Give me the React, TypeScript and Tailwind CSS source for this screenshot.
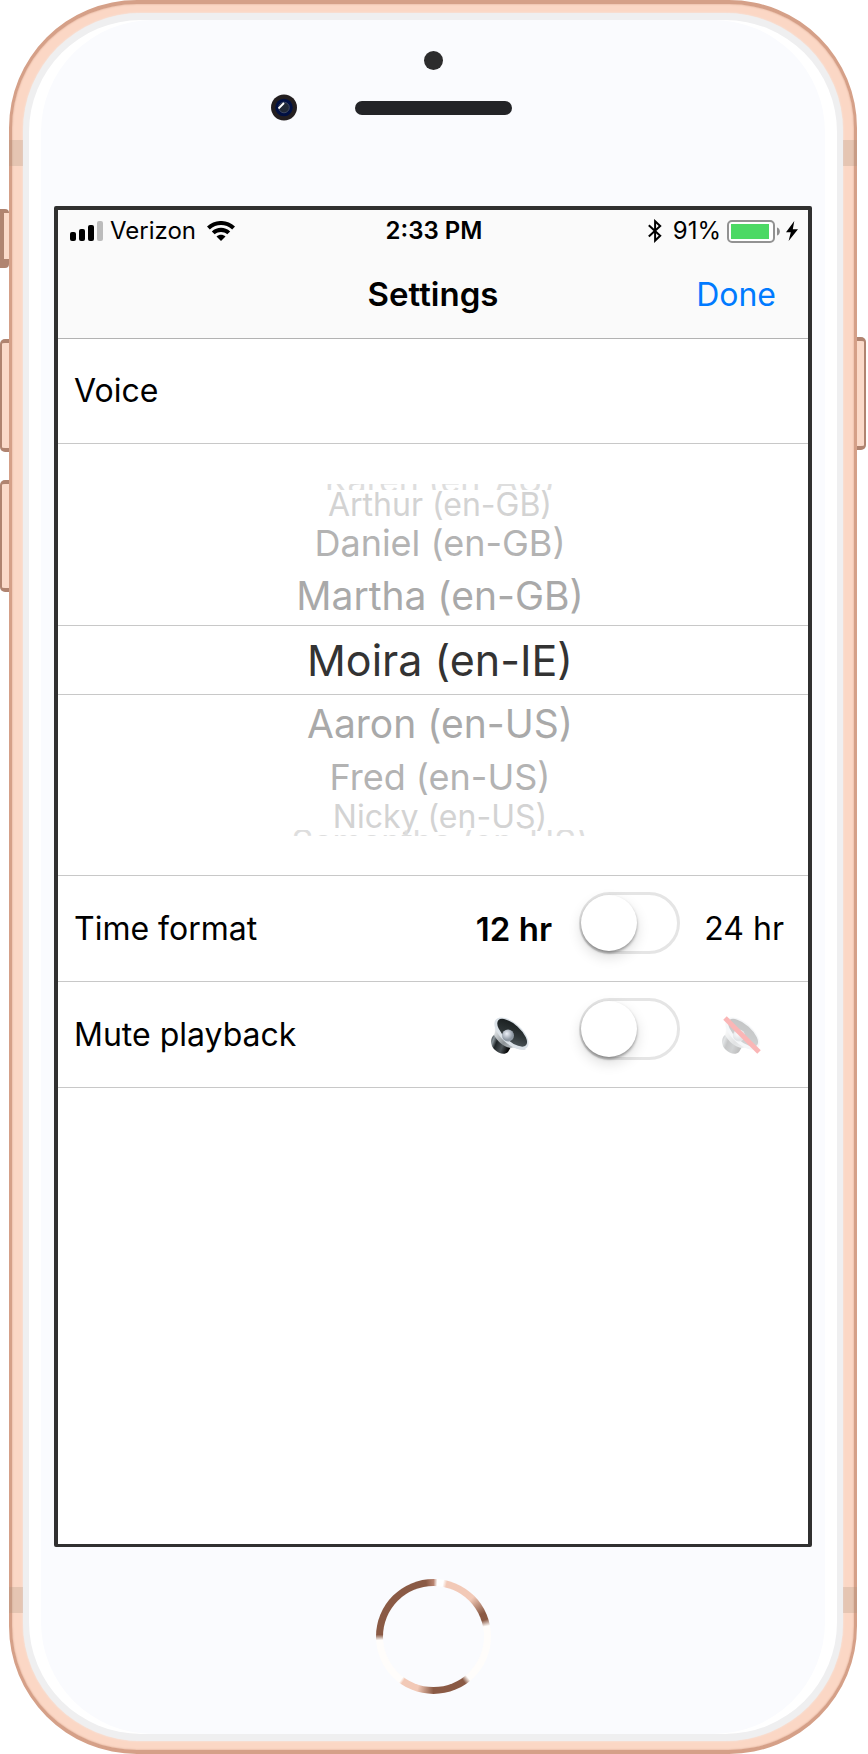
import React, { useState } from "react";

const edgeButton = "absolute border-[#b08470] bg-[#fbdac9]";

const antennaBands = [
  "left-0 top-[140px]",
  "right-0 top-[140px]",
  "left-0 bottom-[141px]",
  "right-0 bottom-[141px]",
];

const voices = [
  { name: "Karen (en-AU)", row: "h-[6px] items-end overflow-hidden text-[34px] text-[#dedede]", text: "-mb-[8px]" },
  { name: "Arthur (en-GB)", row: "h-[30px] items-center text-[32px] text-[#d3d3d3]", text: "" },
  { name: "Daniel (en-GB)", row: "h-[46px] items-center text-[36px] text-[#b3b3b3]", text: "" },
  { name: "Martha (en-GB)", row: "h-[59px] items-center text-[39px] text-[#a9a9a9]", text: "" },
  { name: "Moira (en-IE)", row: "h-[70px] items-center text-[43px] text-[#333333]", text: "" },
  { name: "Aaron (en-US)", row: "h-[56px] items-center text-[39px] text-[#a9a9a9]", text: "" },
  { name: "Fred (en-US)", row: "h-[52px] items-center text-[36px] text-[#b3b3b3]", text: "" },
  { name: "Nicky (en-US)", row: "h-[27px] items-center text-[32px] text-[#d3d3d3]", text: "" },
  { name: "Samantha (en-US)", row: "h-[6px] items-start overflow-hidden text-[34px] text-[#dedede]", text: "-mt-[5px]" },
];

function SignalBars() {
  return (
    <svg width="33" height="20" viewBox="0 0 33 20" aria-hidden="true">
      <rect x="0" y="11" width="6" height="9" rx="2" />
      <rect x="9" y="8" width="6" height="12" rx="2" />
      <rect x="18" y="4" width="6" height="16" rx="2" />
      <rect x="27" y="0" width="6" height="20" rx="2" fill="#bcbcbc" />
    </svg>
  );
}

function Wifi() {
  return (
    <svg width="28" height="20" viewBox="0 0 28 20" aria-hidden="true">
      <path d="M0 5.6C8 -1.9 20 -1.9 28 5.6L25.2 8.4C18.8 2.6 9.2 2.6 2.8 8.4Z" />
      <path d="M4.8 10.5C10 5.6 18 5.6 23.2 10.5L20.3 13.3C16.6 10.1 11.4 10.1 7.7 13.3Z" />
      <path d="M9.5 15.4C12 13.2 16 13.2 18.5 15.4L14 20Z" />
    </svg>
  );
}

function Bluetooth() {
  return (
    <svg width="14" height="24" viewBox="0 0 14 24" fill="none" stroke="#000" strokeWidth="2" aria-hidden="true">
      <path d="M.8 6.2L12.2 16.8L7.1 21.6V2.2L12.2 7L.8 17.6" />
    </svg>
  );
}

function Battery() {
  return (
    <svg width="53" height="23" viewBox="0 0 53 23" aria-hidden="true">
      <rect x="1" y="1" width="46" height="21" rx="4" fill="#fff" stroke="#929292" strokeWidth="2" />
      <rect x="4" y="4" width="38" height="15" fill="#4cd964" />
      <path d="M50 7.5C53.8 8.5 53.8 14.5 50 15.5Z" fill="#8e8e8e" />
    </svg>
  );
}

function Bolt() {
  return (
    <svg width="12" height="20" viewBox="0 0 12 20" aria-hidden="true">
      <path d="M8.3 0L0 11.2H4.8L2.6 20L12 8.2H6.8Z" />
    </svg>
  );
}

function Speaker({ id, muted = false }: { id: string; muted?: boolean }) {
  return (
    <svg width="40" height="40" viewBox="0 0 40 40" aria-hidden="true">
      <defs>
        <linearGradient id={id + "-magnet"} x1="0" y1="0" x2="1" y2=".4">
          <stop offset="0" stopColor="#15181a" />
          <stop offset=".2" stopColor="#8c969c" />
          <stop offset=".38" stopColor="#1f2427" />
          <stop offset=".7" stopColor="#4b5256" />
          <stop offset="1" stopColor="#08090a" />
        </linearGradient>
        <linearGradient id={id + "-basket"} x1="0" y1=".2" x2="1" y2="1">
          <stop offset="0" stopColor="#f2f5f7" />
          <stop offset=".45" stopColor="#8c9296" />
          <stop offset=".7" stopColor="#b9bfc3" />
          <stop offset="1" stopColor="#e5e9ed" />
        </linearGradient>
        <linearGradient id={id + "-cone"} x1="0" y1="0" x2="1" y2="1">
          <stop offset="0" stopColor="#141819" />
          <stop offset=".55" stopColor="#2f3638" />
          <stop offset="1" stopColor="#566064" />
        </linearGradient>
        <radialGradient id={id + "-cap"} cx=".4" cy=".35">
          <stop offset="0" stopColor="#eef2fa" />
          <stop offset="1" stopColor="#8f99a4" />
        </radialGradient>
      </defs>
      <g opacity={muted ? 0.25 : 1}>
        <path d="M4 19C0 22 0 30 5 34C9 38 15 39 18 36L21 31L8 18Z" fill={"url(#" + id + "-magnet)"} />
        <path d="M5 6C4 12 6 15 4 19C8 26 14 31 21 32C24 30 28 34 36 34Z" fill={"url(#" + id + "-basket)"} />
        <g transform="rotate(42 21.5 17.5)">
          <ellipse cx="21.5" cy="17.5" rx="21" ry="10.5" fill="#dbe2e8" />
          <ellipse cx="21.5" cy="16.5" rx="18.6" ry="8.2" fill={"url(#" + id + "-cone)"} />
        </g>
        <circle cx="18" cy="19.5" r="6" fill={"url(#" + id + "-cap)"} />
      </g>
      {muted && <path d="M4 2L38 36" stroke="#fab6b6" strokeWidth="5" />}
    </svg>
  );
}

function Switch({ label }: { label: string }) {
  const [on, setOn] = useState(false);
  return (
    <label className="relative mb-3 flex h-[62px] w-[101px] shrink-0 cursor-pointer items-center">
      <input
        type="checkbox"
        role="switch"
        aria-label={label}
        checked={on}
        onChange={(e) => setOn(e.target.checked)}
        className="peer h-[62px] w-full appearance-none rounded-full border-[3px] border-[#e5e5e5] bg-white checked:border-[#4cd964] checked:bg-[#4cd964]"
      />
      <span className="pointer-events-none absolute left-[2px] top-[3px] size-[56px] rounded-full bg-white shadow-[0_2px_3px_rgba(0,0,0,0.35),0_6px_14px_rgba(0,0,0,0.14)] peer-checked:left-[43px]" />
    </label>
  );
}

export default function App() {
  return (
    <div className="flex justify-center bg-white pl-[9px] pr-[11px] font-['Inter','Liberation_Sans',sans-serif] text-black">
      <div className="relative w-full">
        <span className={edgeButton + " -left-[14px] top-[209px] h-[59px] w-[14px] rounded-[4px] border-b-[9px] border-l-[9px] border-t-[4px]"} />
        <span className={edgeButton + " -left-[9px] top-[339px] h-[113px] w-[9px] rounded-l-[5px] border-y-4 border-l-2"} />
        <span className={edgeButton + " -left-[9px] top-[480px] h-[112px] w-[9px] rounded-l-[5px] border-y-4 border-l-2"} />
        <span className={edgeButton + " -right-[9px] top-[337px] h-[113px] w-[9px] rounded-r-[5px] border-y-4 border-r-2"} />

        <div className="relative rounded-[128px] border-x-[3px] border-y-4 border-[#d5a088] bg-[#fbd7c5] px-[11px] py-[9px] shadow-[inset_0_0_2px_#d5a088]">
          {antennaBands.map((place) => (
            <span key={place} className={"absolute -mx-[3px] -my-1 h-[26px] w-[14px] bg-[#a5907a]/25 " + place} />
          ))}
          <div className="rounded-[118px] bg-[#efeff0] px-[6px] py-[7px] shadow-[0_0_2px_#efeff0]">
            <div className="rounded-[112px] bg-white px-3">
              <div className="rounded-[112px] bg-[#fafbfe] px-[13px]">
                <div className="flex h-[186px] flex-col items-center pt-[31px]">
                  <span className="size-[19px] rounded-full bg-[#2c2c2d]" />
                  <div className="mt-6 grid w-full grid-cols-[1fr_157px_1fr] items-center">
                    <svg className="mr-[58px] justify-self-end" width="26" height="27" viewBox="0 0 26 27" aria-hidden="true">
                      <circle cx="13" cy="13.5" r="13" fill="#231e20" />
                      <circle cx="13" cy="13.5" r="8.7" fill="#011042" />
                      <circle cx="13" cy="13.5" r="5.3" fill="#202836" stroke="#46506b" strokeWidth=".8" />
                      <path d="M7.5 14.5L13 9" stroke="#fff" strokeWidth="1.8" />
                    </svg>
                    <span className="h-[14px] rounded-full bg-[#232427]" />
                  </div>
                </div>

                <main className="flex min-h-[1341px] flex-col rounded-[2px] border-x-4 border-b-[3px] border-t-4 border-[#303030] bg-white">
                  <header className="h-[129px] border-b border-[#b2b2b2] bg-[#fafafa]">
                    <div className="grid h-[42px] grid-cols-[1fr_auto_1fr] items-center pl-3 pr-[10px] text-[24px] leading-[30px]">
                      <div className="flex items-center gap-[7px]">
                        <SignalBars />
                        <span>Verizon</span>
                        <span className="pl-1"><Wifi /></span>
                      </div>
                      <span className="font-semibold">2:33 PM</span>
                      <div className="flex items-center justify-end gap-[6px]">
                        <Bluetooth />
                        <span className="pl-[5px]">91%</span>
                        <Battery />
                        <Bolt />
                      </div>
                    </div>
                    <div className="grid h-[86px] grid-cols-[1fr_auto_1fr] items-baseline pt-[22px] leading-[40px]">
                      <h1 className="col-start-2 text-[33px] font-semibold">Settings</h1>
                      <button type="button" className="mr-8 justify-self-end text-[32px] text-[#007aff]">Done</button>
                    </div>
                  </header>

                  <h2 className="flex h-[105px] items-center border-b border-[#c8c8c8] px-4 text-[32px] leading-[40px]">Voice</h2>

                  <div role="listbox" aria-label="Voice" className="flex h-[432px] flex-col border-b border-[#c8c8c8] pt-[40px]">
                    {voices.map((v) => {
                      const selected = v.name === "Moira (en-IE)";
                      return (
                        <div
                          key={v.name}
                          role="option"
                          aria-selected={selected}
                          className={"flex shrink-0 justify-center whitespace-nowrap pl-[14px] leading-none " + (selected ? "border-y border-[#c8c8c8] " : "") + v.row}
                        >
                          <span className={v.text}>{v.name}</span>
                        </div>
                      );
                    })}
                  </div>

                  <section className="flex h-[106px] items-center border-b border-[#c8c8c8] pl-4 pr-6 text-[32px] leading-[40px]">
                    <span className="flex-1">Time format</span>
                    <span className="text-[33px] font-semibold">12 hr</span>
                    <span className="pl-[27px] pr-6"><Switch label="Time format, 24 hr" /></span>
                    <span className="flex w-20 justify-end whitespace-nowrap">24 hr</span>
                  </section>

                  <section className="flex h-[106px] items-center border-b border-[#c8c8c8] pl-4 pr-6 text-[32px] leading-[40px]">
                    <span className="flex-1">Mute playback</span>
                    <span className="pr-[22px] pt-[2px]"><Speaker id="on" /></span>
                    <span className="pl-[27px] pr-6"><Switch label="Mute playback" /></span>
                    <span className="flex w-20 justify-center pr-[6px] pt-[2px]"><Speaker id="off" muted /></span>
                  </section>
                </main>

                <div className="flex h-[187px] justify-center pt-8">
                  <button
                    type="button"
                    aria-label="Home"
                    className="size-[115px] rounded-full bg-[conic-gradient(#b88370_0deg,#ffffff_4deg,#ffffff_10deg,#f2c9b7_14deg,#f2c9b7_45deg,#8a5a45_65deg,#8a5a45_72deg,#fffdfb_79deg,#fffdfb_140deg,#8a5a45_146deg,#8a5a45_180deg,#f2c9b7_197deg,#f2c9b7_214deg,#fffdfb_217deg,#fffdfb_266deg,#8a5a45_272deg,#8a5a45_352deg,#b88370_360deg)] p-[7px]"
                  >
                    <span className="block size-full rounded-full bg-[#fafbfe]" />
                  </button>
                </div>
              </div>
            </div>
          </div>
        </div>
      </div>
    </div>
  );
}
